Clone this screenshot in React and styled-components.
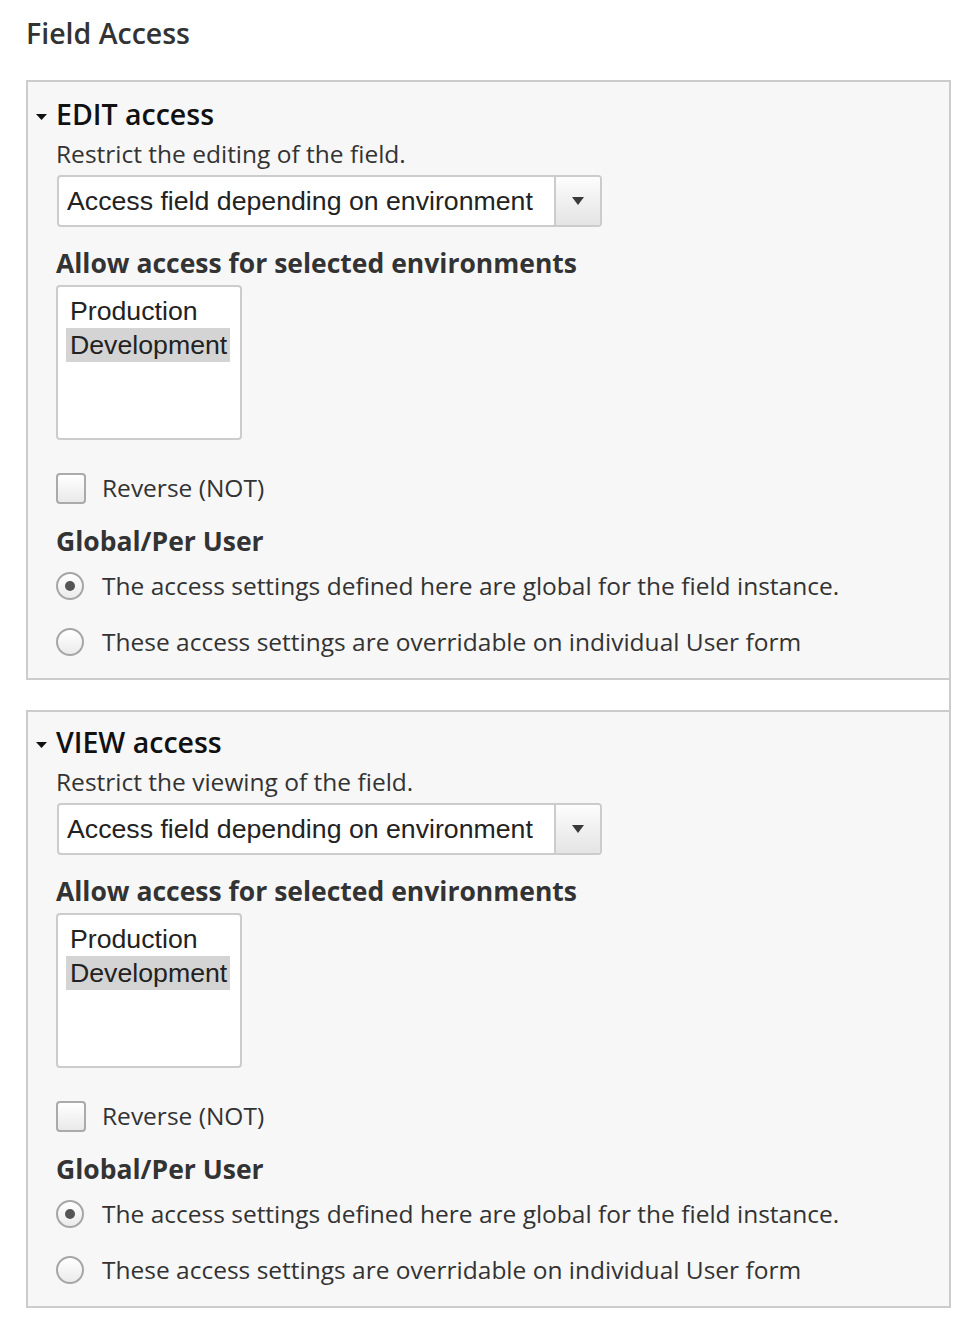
import React from "react";
import styled, { createGlobalStyle } from "styled-components";

const Global = createGlobalStyle`
  html, body { margin: 0; padding: 0; background: #fff; }
  body { font-family: "Open Sans", "Liberation Sans", sans-serif; color: #333; }
  * { box-sizing: border-box; }
`;

const Page = styled.div`
  padding: 15px 25px 27px 26px;
`;

const Heading = styled.h2`
  margin: 0;
  font-size: 28.5px;
  line-height: 36px;
  font-weight: 600;
  color: #333;
`;

const Group = styled.div`
  margin-top: 29px;
  width: 925px;
  border-right: 2px solid #ccc;
`;

const Fieldset = styled.section`
  background: #f7f7f7;
  border: 2px solid #ccc;
  border-right: 0;
  padding: ${(p) => p.$top}px 28px 20px 28px;
  & + & {
    margin-top: 30px;
  }
`;

const Legend = styled.div`
  display: flex;
  align-items: center;
  margin-left: -20px;
  font-size: 28.5px;
  line-height: 38px;
  font-weight: 600;
  color: #111;
`;

const ArrowSlot = styled.span`
  width: 20px;
  display: flex;
  align-items: center;
  padding-top: 5px;
`;

const Description = styled.div`
  margin-top: 5px;
  font-size: 24.5px;
  line-height: 32px;
  color: #333;
`;

const Select = styled.div`
  margin-top: 5px;
  margin-left: 1px;
  width: 545px;
  height: 52px;
  display: flex;
  border: 2px solid #ccc;
  border-radius: 4px;
  background: #fff;
  overflow: hidden;
`;

const SelectText = styled.div`
  flex: 1;
  padding-left: 8px;
  display: flex;
  align-items: center;
  font-family: "Liberation Sans", Arial, sans-serif;
  font-size: 26.7px;
  color: #222;
`;

const SelectButton = styled.div`
  width: 46px;
  border-left: 2px solid #ccc;
  background: linear-gradient(#fdfdfd, #e4e4e4);
  display: flex;
  align-items: center;
  justify-content: center;
`;

const Label = styled.div`
  margin-top: ${(p) => p.$mt}px;
  font-size: 26.5px;
  line-height: 36px;
  font-weight: 700;
  color: #333;
`;

const ListBox = styled.div`
  margin-top: 4px;
  width: 186px;
  height: 155px;
  border: 2px solid #ccc;
  border-radius: 4px;
  background: #fff;
  padding: 7px 10px 0 8px;
`;

const Option = styled.div`
  padding: 0 3px 0 4px;
  height: 34px;
  line-height: 34px;
  font-family: "Liberation Sans", Arial, sans-serif;
  font-size: 26.7px;
  color: #222;
  background: ${(p) => (p.$selected ? "#d4d4d4" : "transparent")};
  white-space: nowrap;
`;

const CheckRow = styled.div`
  margin-top: 32px;
  display: flex;
  align-items: center;
  gap: 16px;
`;

const Checkbox = styled.span`
  width: 30px;
  height: 31px;
  border: 2px solid #aaa;
  border-radius: 4px;
  background: linear-gradient(#fff, #e9e9e9);
`;

const OptionLabel = styled.span`
  font-size: 24.5px;
  line-height: 32px;
  color: #333;
`;

const RadioList = styled.div`
  margin-top: 11px;
  display: flex;
  flex-direction: column;
  gap: 24px;
`;

const RadioRow = styled.div`
  display: flex;
  align-items: center;
  gap: 18px;
`;

const Radio = styled.span`
  width: 28px;
  height: 28px;
  border-radius: 50%;
  border: 2px solid #a6a6a6;
  background: linear-gradient(#fff, #ebebeb);
  display: flex;
  align-items: center;
  justify-content: center;
  &::after {
    content: "";
    width: 10px;
    height: 10px;
    border-radius: 50%;
    background: ${(p) => (p.$checked ? "#555" : "transparent")};
  }
`;

const Caret = () => (
  <svg width="11" height="6" viewBox="0 0 11 6">
    <path d="M0 0 H11 L5.5 6 Z" fill="#111" />
  </svg>
);

const SelectArrow = () => (
  <svg width="12" height="8" viewBox="0 0 12 8">
    <path d="M0 0 H12 L6 8 Z" fill="#3a3a3a" />
  </svg>
);

function AccessFieldset({ title, description, top }) {
  return (
    <Fieldset $top={top}>
      <Legend>
        <ArrowSlot>
          <Caret />
        </ArrowSlot>
        {title}
      </Legend>
      <Description>{description}</Description>
      <Select>
        <SelectText>Access field depending on environment</SelectText>
        <SelectButton>
          <SelectArrow />
        </SelectButton>
      </Select>
      <Label $mt={18}>Allow access for selected environments</Label>
      <ListBox>
        <Option>Production</Option>
        <Option $selected>Development</Option>
      </ListBox>
      <CheckRow>
        <Checkbox />
        <OptionLabel>Reverse (NOT)</OptionLabel>
      </CheckRow>
      <Label $mt={19}>Global/Per User</Label>
      <RadioList>
        <RadioRow>
          <Radio $checked />
          <OptionLabel>The access settings defined here are global for the field instance.</OptionLabel>
        </RadioRow>
        <RadioRow>
          <Radio />
          <OptionLabel>These access settings are overridable on individual User form</OptionLabel>
        </RadioRow>
      </RadioList>
    </Fieldset>
  );
}

export default function App() {
  return (
    <>
      <Global />
      <Page>
        <Heading>Field Access</Heading>
        <Group>
          <AccessFieldset top={13} title="EDIT access" description="Restrict the editing of the field." />
          <AccessFieldset top={11} title="VIEW access" description="Restrict the viewing of the field." />
        </Group>
      </Page>
    </>
  );
}
